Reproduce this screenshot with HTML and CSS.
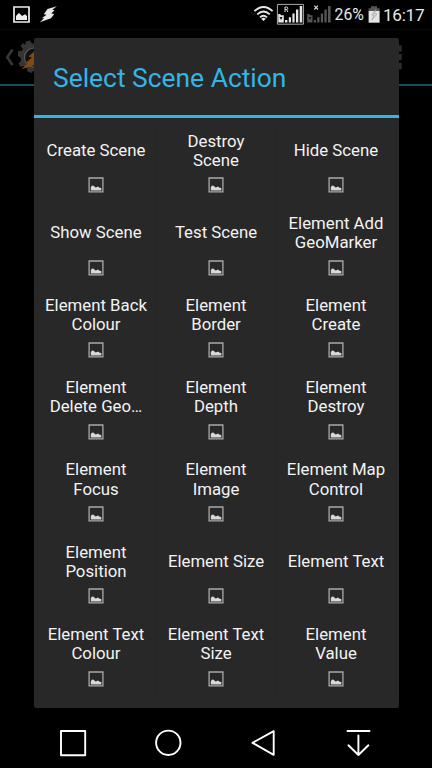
FILE: index.html
```html
<!DOCTYPE html>
<html lang="en">
<head>
<meta charset="utf-8">
<title>Select Scene Action</title>
<link rel="stylesheet" href="styles.css">
</head>
<body>
<svg class="defs" width="0" height="0">
  <symbol id="picture" viewBox="0 0 16 16">
    <path d="M1.1 1H14.9V14.8H1.1Z" fill="none" stroke="#a9a9a9" stroke-width="1.3"/>
    <path d="M2.8 13.4V10.2L3.8 8.7L5.2 8.4L7.6 10.5L10.2 9.6L11.5 10.7L13.3 11V13.4Z" fill="#d8d8d8"/>
  </symbol>
</svg>
<div class="screen">
  <header class="status">
    <svg class="status-left" width="60" height="29" viewBox="0 0 60 29">
      <path d="M14 7H29V22H14Z" fill="none" stroke="#eee" stroke-width="1.7"/>
      <path d="M16 20V16L18.5 13.2L19.7 13.5L22 16L25 14.3L27 16V20Z" fill="#eee"/>
      <path d="M56.8 6.3L47.5 9L43.8 14.3L46.6 14.8L42 18L44 18.3L39.8 22.2L51 18.2L54.2 14L51.3 13.4L54.5 10.2L52.3 9.8Z" fill="#e8e8e8"/>
    </svg>
    <svg class="status-signal" width="82" height="29" viewBox="250 0 82 29">
      <g fill="none" stroke="#e8e8e8" stroke-width="1.8">
        <path d="M254.4 11.2Q263.5 2.8 272.6 11.2"/>
        <path d="M257.2 14.3Q263.5 8.6 269.8 14.3"/>
        <path d="M260 17.3Q263.5 14.2 267 17.3"/>
      </g>
      <path d="M261.2 18.7Q263.5 17 265.8 18.7L263.5 21Z" fill="#eee"/>
      <path d="M277.4 4.4H303.4V24.2H277.4Z" fill="none" stroke="#aaa" stroke-width="1"/>
      <g fill="#e6e6e6">
        <path d="M278.2 14H280.2L281 15.2H283.8V22.5H278.2Z"/>
        <path d="M285 20H287.4V22.5H285ZM288.8 17.3H291V22.5H288.8ZM292.4 13.5H294.6V22.5H292.4ZM296 9.5H298.3V22.5H296ZM299.7 6H302.2V22.5H299.7Z"/>
      </g>
      <path d="M279.5 17H282.5L281 20Z" fill="#111"/>
      <path d="M285 12V7H286.5Q287.8 7 287.8 8.2Q287.8 9.5 286.5 9.5H285M286.5 9.5L287.9 12" fill="none" stroke="#ddd" stroke-width="1"/>
      <g fill="#555">
        <path d="M307.2 14H309.2L310 15.2H312.5V22.5H307.2Z"/>
        <path d="M313.8 20H316V22.5H313.8ZM317.2 17.3H319.5V22.5H317.2ZM320.8 13.5H323V22.5H320.8ZM324.4 9.5H326.7V22.5H324.4ZM328 6H330.6V22.5H328Z"/>
      </g>
      <path d="M308.5 17H311.5L310 20Z" fill="#111"/>
      <path d="M314.3 5.7L318 9.5M318 5.7L314.3 9.5" stroke="#ddd" stroke-width="1.1"/>
    </svg>
    <span class="battery-text">26%</span>
    <svg class="battery" width="12" height="29" viewBox="368 0 12 29">
      <path d="M371 6.3H377V8.2H379.6V12H368.6V8.2H371Z" fill="#555"/>
      <path d="M368.6 11H379.6V22.7H368.6Z" fill="#e4e4e4"/>
      <path d="M376 9.5L371.5 15H374L372 20L377 14H374.5Z" fill="#ddd" stroke="#999" stroke-width=".6"/>
    </svg>
    <span class="clock">16:17</span>
  </header>
  <div class="appbar">
    <svg width="60" height="54" viewBox="0 30 60 54">
      <path d="M12.5 49.5L7.3 57.3L12.5 65" fill="none" stroke="#363636" stroke-width="2.7"/>
      <path d="M25 45L26 41.5L30 40.5L32 43.5H40V71H33L32 73L27.5 71.5L27 68.2L24 66L20.7 67L18.5 63.5L21 60.8V58L18 56V51.2L22 50.7L23 49L20.6 46L23 43Z" fill="#353535"/>
      <circle cx="34" cy="57.5" r="9.5" fill="#111" stroke="#555" stroke-width="1.2"/>
      <path d="M37 49L28.5 56.5L32 57.5L26 62.5L28 63.3L21 69.5L37 64Z" fill="#85490a"/>
    </svg>
    <svg width="8" height="54" viewBox="396 30 8 54">
      <path d="M396 45.5H401.7V51.5H396ZM396 54H401.7V60H396ZM396 63H401.7V69.2H396Z" fill="#2d2d2d"/>
    </svg>
  </div>
  <main class="dialog">
    <h1 class="title">Select Scene Action</h1>
    <div class="grid">
      <div class="cell"><p>Create Scene</p><svg><use href="#picture"/></svg></div>
      <div class="cell"><p>Destroy<br>Scene</p><svg><use href="#picture"/></svg></div>
      <div class="cell"><p>Hide Scene</p><svg><use href="#picture"/></svg></div>
      <div class="cell"><p>Show Scene</p><svg><use href="#picture"/></svg></div>
      <div class="cell"><p>Test Scene</p><svg><use href="#picture"/></svg></div>
      <div class="cell"><p>Element Add<br>GeoMarker</p><svg><use href="#picture"/></svg></div>
      <div class="cell"><p>Element Back<br>Colour</p><svg><use href="#picture"/></svg></div>
      <div class="cell"><p>Element<br>Border</p><svg><use href="#picture"/></svg></div>
      <div class="cell"><p>Element<br>Create</p><svg><use href="#picture"/></svg></div>
      <div class="cell"><p>Element<br>Delete Geo…</p><svg><use href="#picture"/></svg></div>
      <div class="cell"><p>Element<br>Depth</p><svg><use href="#picture"/></svg></div>
      <div class="cell"><p>Element<br>Destroy</p><svg><use href="#picture"/></svg></div>
      <div class="cell"><p>Element<br>Focus</p><svg><use href="#picture"/></svg></div>
      <div class="cell"><p>Element<br>Image</p><svg><use href="#picture"/></svg></div>
      <div class="cell"><p>Element Map<br>Control</p><svg><use href="#picture"/></svg></div>
      <div class="cell"><p>Element<br>Position</p><svg><use href="#picture"/></svg></div>
      <div class="cell"><p>Element Size</p><svg><use href="#picture"/></svg></div>
      <div class="cell"><p>Element Text</p><svg><use href="#picture"/></svg></div>
      <div class="cell"><p>Element Text<br>Colour</p><svg><use href="#picture"/></svg></div>
      <div class="cell"><p>Element Text<br>Size</p><svg><use href="#picture"/></svg></div>
      <div class="cell"><p>Element<br>Value</p><svg><use href="#picture"/></svg></div>
    </div>
  </main>
  <nav class="navbar">
    <svg viewBox="0 0 30 30"><path d="M3 3H27.2V27.2H3Z"/></svg>
    <svg viewBox="0 0 30 30"><circle cx="15.3" cy="14.8" r="12.2"/></svg>
    <svg viewBox="0 0 30 30"><path d="M25.7 3.2V26.8L4.5 14.8Z"/></svg>
    <svg viewBox="0 0 30 30"><path d="M4.5 3H26.5M15.4 7.5V27M5.4 17.3L15.4 27L25.4 17.3"/></svg>
  </nav>
</div>
</body>
</html>
```
FILE: styles.css
```css
* { box-sizing: border-box; }
body { margin: 0; background: #000; font-family: Roboto, sans-serif; }
.defs { display: block; }
.screen {
  position: relative;
  display: flex;
  flex-direction: column;
  width: 432px;
  height: 768px;
  overflow: hidden;
  background: #000;
}
.status {
  display: flex;
  align-items: center;
  height: 30px;
  padding-right: 7px;
  border-bottom: 1px solid #080808;
  color: #e8e8e8;
}
.status-signal { margin-left: auto; }
.battery-text { width: 33px; margin-left: 2.5px; font-size: 15.8px; white-space: nowrap; }
.battery { margin: 0 3px 0 .5px; }
.clock { width: 42px; font-size: 17.2px; letter-spacing: -.3px; white-space: nowrap; }
.appbar {
  display: flex;
  justify-content: space-between;
  height: 56px;
  padding-right: 28px;
  border-bottom: 2px solid #174c61;
}
.dialog {
  position: absolute;
  left: 34px;
  top: 38px;
  width: 364.5px;
  height: 669.5px;
  border-radius: 2px;
  background: #282828;
}
.title {
  height: 80px;
  margin: 0;
  padding-left: 19px;
  border-bottom: 3px solid #33b5e5;
  color: #33b5e5;
  font-size: 26.4px;
  font-weight: 400;
  line-height: 80px;
}
.grid {
  display: grid;
  grid-template-columns: repeat(3, 120px);
  grid-auto-rows: 82.2px;
  padding: 3.4px 2px 0;
}
.cell {
  display: flex;
  flex-direction: column;
  align-items: center;
  padding: 10px 0 0 1px;
  border-right: 1px solid #262626;
  color: #f3f3f3;
  text-align: center;
}
.cell p {
  display: flex;
  align-items: center;
  height: 39px;
  margin: 0;
  font-size: 16.8px;
  line-height: 19.2px;
  white-space: nowrap;
}
.cell svg { width: 16px; height: 16px; margin-top: 7px; }
.navbar {
  display: flex;
  gap: 65px;
  margin-top: auto;
  padding: 0 0 10px 58px;
}
.navbar svg {
  width: 30px;
  height: 30px;
  fill: none;
  stroke: #fff;
  stroke-width: 1.9;
  stroke-linecap: round;
  stroke-linejoin: round;
}
```
